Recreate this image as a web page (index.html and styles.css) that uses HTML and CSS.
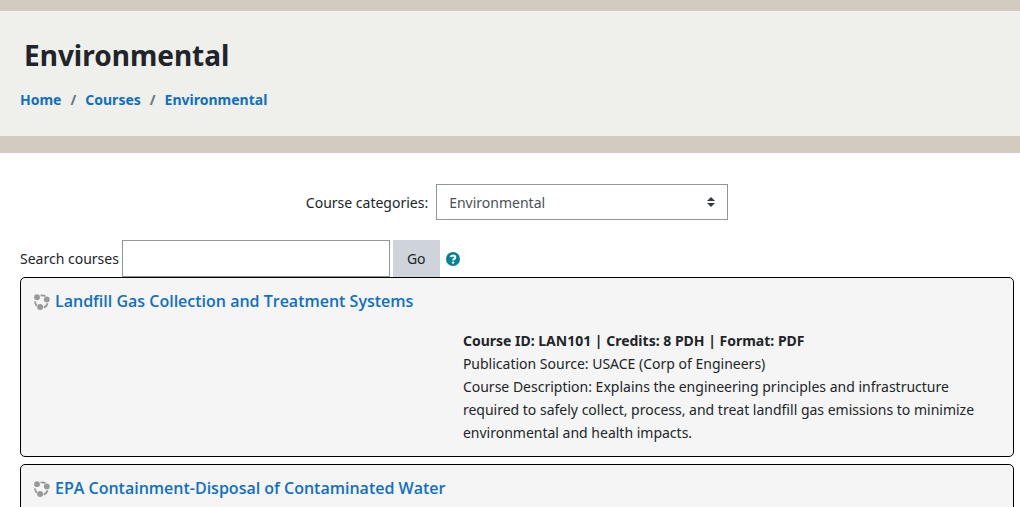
FILE: index.html
```html
<!DOCTYPE html>
<html lang="en">
<head>
    <meta charset="UTF-8">
    <meta name="viewport" content="width=device-width, initial-scale=1.0">
    <title>Environmental</title>
    <link rel="stylesheet" href="styles.css">
</head>
<body>

<svg class="sprite" aria-hidden="true">
    <symbol id="course-icon" viewBox="0 0 16 16">
        <circle cx="3" cy="3.2" r="2.9"/>
        <circle cx="12.8" cy="5.4" r="2.9"/>
        <circle cx="6.1" cy="12.9" r="3"/>
        <path d="M6.6 1.6Q9.2 .9 11.4 2.2M1.2 7.4Q1 10 2.8 11.8M9.8 13.6Q12.6 12.6 13.6 9.4" fill="none" stroke="currentColor" stroke-width="1.9"/>
    </symbol>
</svg>

<header class="page-header">
    <h1>Environmental</h1>
    <nav class="breadcrumb">
        <a href="#">Home</a>
        <span>/</span>
        <a href="#">Courses</a>
        <span>/</span>
        <a href="#">Environmental</a>
    </nav>
</header>

<main class="content">
    <form class="categories">
        <label for="category">Course categories:</label>
        <select id="category">
            <option>Environmental</option>
        </select>
    </form>

    <form class="search">
        <label for="search">Search courses</label>
        <input type="text" id="search">
        <button type="submit">Go</button>
        <a class="help" href="#" aria-label="Help with Search courses">
            <svg viewBox="0 0 14 14">
                <circle cx="7" cy="7" r="7" fill="#008196"/>
                <path d="M4.6 5.2Q5.3 3.5 7.1 3.5Q9.3 3.6 9.3 5.4Q9.3 6.5 8.1 7Q7.1 7.5 7.1 8.5" fill="none" stroke="#fff" stroke-width="2"/>
                <circle cx="7.1" cy="10.6" r="1.2" fill="#fff"/>
            </svg>
        </a>
    </form>

    <div class="coursebox">
        <h3>
            <svg class="icon"><use href="#course-icon"/></svg>
            <a href="#">Landfill Gas Collection and Treatment Systems</a>
        </h3>
        <div class="summary">
            <strong>Course ID: LAN101 | Credits: 8 PDH | Format: PDF</strong>
            <p>Publication Source: USACE (Corp of Engineers)</p>
            <p>Course Description: Explains the engineering principles and infrastructure required to safely collect, process, and treat landfill gas emissions to minimize environmental and health impacts.</p>
        </div>
    </div>

    <div class="coursebox">
        <h3>
            <svg class="icon"><use href="#course-icon"/></svg>
            <a href="#">EPA Containment-Disposal of Contaminated Water</a>
        </h3>
    </div>
</main>

</body>
</html>
```

FILE: styles.css
```css
* {
    box-sizing: border-box;
}
body {
    margin: 0;
    font-family: "Segoe UI", "Noto Sans", sans-serif;
    font-size: 14px;
    line-height: 23px;
    color: #212529;
    background: #fff;
}
h1, h3, p {
    margin: 0;
}
a {
    color: #0f6fc5;
    text-decoration: none;
}
.sprite {
    display: none;
}
.page-header {
    padding: 24px 20px 25px;
    background: #efefeb;
    border-top: 11px solid #d3cbbf;
    border-bottom: 17px solid #d3cbbf;
}
.page-header h1 {
    padding-left: 4px;
    font-size: 28px;
    line-height: 40px;
}
.breadcrumb {
    display: flex;
    gap: 9px;
    margin-top: 13px;
    font-weight: bold;
}
.breadcrumb span {
    color: #6a737b;
}
.content {
    padding: 31px 6px 0 20px;
}
.categories {
    display: flex;
    justify-content: center;
    align-items: center;
    gap: 8px;
    margin-bottom: 20px;
}
select {
    width: 292px;
    height: 36px;
    padding: 0 12px;
    border: 1px solid #8f959e;
    border-radius: 0;
    appearance: none;
    font: inherit;
    color: #495057;
    background: #fff url("data:image/svg+xml,%3Csvg xmlns='http://www.w3.org/2000/svg' viewBox='0 0 4 5'%3E%3Cpath fill='%23343a40' d='M2 0L0 2h4zm0 5L0 3h4z'/%3E%3C/svg%3E") no-repeat right 12px center / 8px 10px;
}
.search {
    display: flex;
    align-items: center;
    gap: 3px;
}
.search input {
    width: 268px;
    height: 37px;
    padding: 6px 12px;
    border: 1px solid #8f959e;
    font: inherit;
}
.search button {
    height: 37px;
    padding: 0 14px;
    border: 0;
    font: inherit;
    color: #212529;
    background: #ced4da;
}
.help {
    display: flex;
    margin-left: 3px;
}
.help svg {
    width: 14px;
    height: 14px;
}
.coursebox {
    padding: 12px 13px;
    margin-bottom: 7px;
    border: 1px solid #000;
    border-radius: 5px;
    background: #f5f5f5;
}
.coursebox h3 {
    display: flex;
    align-items: center;
    gap: 5px;
    font-family: "Segoe UI", "Open Sans", sans-serif;
    font-size: 16px;
    font-weight: 600;
}
.icon {
    width: 16px;
    height: 16px;
    fill: #999;
    color: #999;
}
.summary {
    margin: 16px 0 0 44.4%;
}
```
